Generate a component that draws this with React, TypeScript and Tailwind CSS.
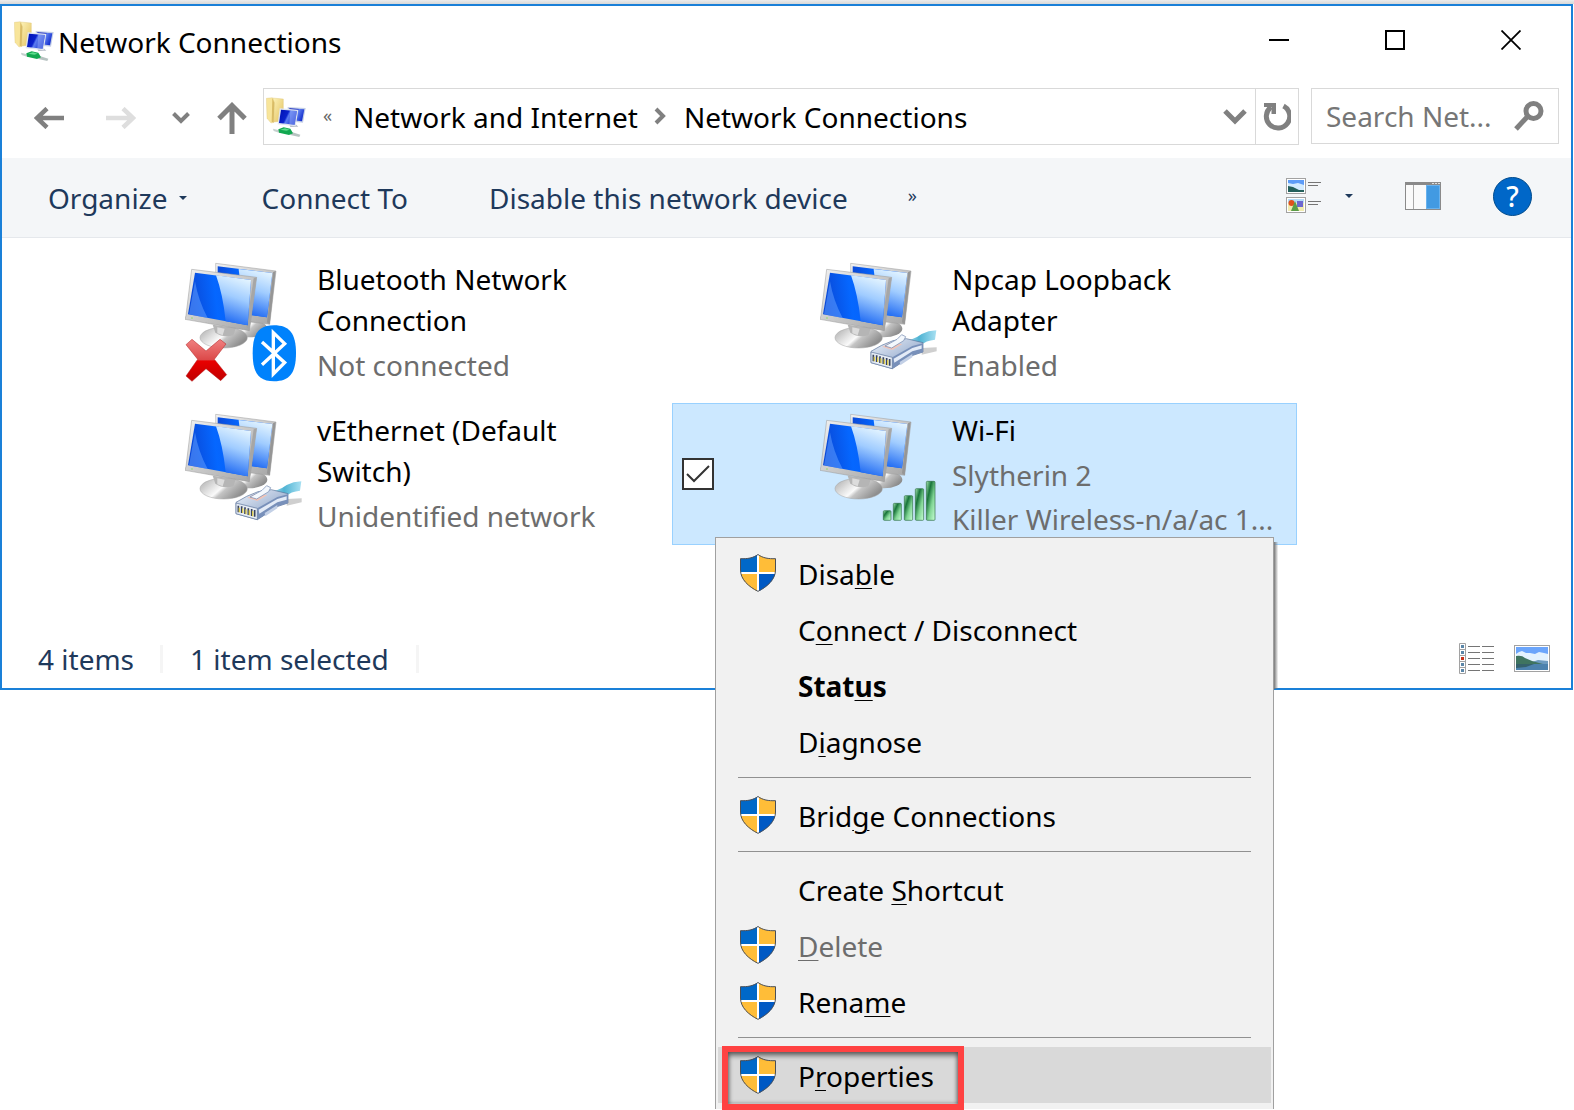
import type { ReactNode } from "react";

function FolderNetworkIcon() {
  return (
    <svg viewBox="797 288 120 120" className="size-10 shrink-0" aria-hidden="true">
      <defs>
        <linearGradient id="fold" x1="0" x2="1" y1="0" y2="1">
          <stop offset="0" stopColor="#fdf2b8" />
          <stop offset="1" stopColor="#e3c25f" />
        </linearGradient>
        <linearGradient id="scr" x1="0" x2="1" y1="0" y2="0.4">
          <stop offset="0" stopColor="#0010b0" />
          <stop offset="0.5" stopColor="#0a22cc" />
          <stop offset="0.6" stopColor="#5c7df0" />
          <stop offset="1" stopColor="#1733cf" />
        </linearGradient>
      </defs>
      <path d="M817 291l32 3v66l-29 3z" fill="url(#fold)" stroke="#d8bb63" strokeWidth="1" />
      <path d="M798 292l18-2 6 14-2 60-8 2-12-14z" fill="#f8e59b" stroke="#dcc27a" strokeWidth="1" />
      <path d="M816 291l6 14-2 60-6-3z" fill="#d9bc66" />
      <path d="M862 318l54 3-8 44-44-4z" fill="#c4cfe6" />
      <path d="M867 322l45 3-7 36-38-4z" fill="url(#scr)" />
      <path d="M866 368l22 3 6 6-24 1z" fill="#b9bec8" />
      <path d="M838 322l56 4-8 50-54-6z" fill="#dfe5f0" />
      <path d="M842 326l48 4-7 41-47-5z" fill="url(#scr)" />
      <path d="M870 329l20 1-7 41-16-2z" fill="#90a8f8" opacity=".55" />
      <path d="M818 383l24 6-4 7-18-6z" fill="#c5d0ce" />
      <path d="M872 392l28 9-3 7-27-6z" fill="#b7c3c1" />
      <path d="M834 385l16-6 20 4 8 14-12 5-30-7z" fill="#12a850" />
      <path d="M840 386l14-4 14 4-10 3z" fill="#5edc8d" />
    </svg>
  );
}

type Badge = "bluetooth" | "cable" | "signal";

function AdapterIcon({ badge }: { badge: Badge }) {
  return (
    <svg viewBox="45 50 351 360" className="h-[120px] w-[117px] shrink-0" aria-hidden="true">
      <defs>
        <linearGradient id="scrFront" x1="0" y1="0.1" x2="1" y2="0">
          <stop offset="0" stopColor="#0a49d8" />
          <stop offset="0.4" stopColor="#0567ff" />
          <stop offset="1" stopColor="#0a5cf2" />
        </linearGradient>
        <linearGradient id="glare" x1="0.7" y1="0" x2="0.45" y2="1">
          <stop offset="0" stopColor="#e8f7ff" />
          <stop offset="0.45" stopColor="#a0ccff" />
          <stop offset="1" stopColor="#1a66f2" />
        </linearGradient>
        <linearGradient id="bezel" x1="0" y1="0" x2="1" y2="1">
          <stop offset="0" stopColor="#f2f2f2" />
          <stop offset="0.5" stopColor="#c9c9c9" />
          <stop offset="1" stopColor="#a3a3a3" />
        </linearGradient>
        <linearGradient id="base" x1="0" y1="0" x2="1" y2="0.5">
          <stop offset="0" stopColor="#a8a8a8" />
          <stop offset="0.35" stopColor="#dedede" />
          <stop offset="0.55" stopColor="#fafafa" />
          <stop offset="0.65" stopColor="#c4c4c4" />
          <stop offset="1" stopColor="#8e8e8e" />
        </linearGradient>
        <linearGradient id="redx" x1="0" y1="0" x2="0" y2="1">
          <stop offset="0" stopColor="#f08080" />
          <stop offset="0.48" stopColor="#dc4a4a" />
          <stop offset="0.52" stopColor="#e80000" />
          <stop offset="1" stopColor="#c00000" />
        </linearGradient>
        <linearGradient id="bar" x1="0" y1="0" x2="1" y2="1">
          <stop offset="0" stopColor="#a8e8b4" />
          <stop offset="0.3" stopColor="#18743a" />
          <stop offset="0.6" stopColor="#7fd493" />
          <stop offset="1" stopColor="#c8ffd6" />
        </linearGradient>
        <linearGradient id="plug" x1="0" y1="0" x2="1" y2="1">
          <stop offset="0" stopColor="#eef3fb" />
          <stop offset="0.5" stopColor="#b3c3dc" />
          <stop offset="1" stopColor="#6f87ad" />
        </linearGradient>
        <linearGradient id="cord" x1="0" y1="0" x2="1" y2="0">
          <stop offset="0" stopColor="#d5f1fa" />
          <stop offset="0.5" stopColor="#4fb3d3" />
          <stop offset="1" stopColor="#a8e0f2" />
        </linearGradient>
      </defs>
      <ellipse cx="236" cy="250" rx="56" ry="26" fill="url(#base)" />
      <path d="M137 54l181 23-19 160-160-20z" fill="url(#bezel)" stroke="#9a9a9a" strokeWidth="1.5" />
      <path d="M143 63l164 20-16 133-148-20z" fill="url(#scrFront)" />
      <path d="M206 71l101 12-16 133-70-10z" fill="url(#glare)" />
      <path d="M317 77l-8 4-18 150 8 6z" fill="#969696" />
      <ellipse cx="161" cy="277" rx="71" ry="31" fill="url(#base)" stroke="#a5a5a5" strokeWidth="1.5" />
      <path d="M128 238l70 10-8 22q-30 8-54-8z" fill="#b5b5b5" />
      <path d="M142 246l22 4-6 20-16-6z" fill="#dcdcdc" />
      <path d="M65 72l195 24-22 160-193-34 3-12z" fill="url(#bezel)" stroke="#989898" strokeWidth="1.5" />
      <path d="M260 96l-9 3-22 146 9 11z" fill="#a6a6a6" />
      <path d="M75 82l168 22-10 136-179-33z" fill="url(#scrFront)" />
      <path d="M138 90l105 14-10 136-66-12q-8-80-29-138z" fill="url(#glare)" />
      <path d="M75 108q10 58 38 110l-56-11z" fill="#5e9cff" opacity=".55" />
      <circle cx="66" cy="218" r="2" fill="#7ee04c" />

      {badge === "bluetooth" && (
        <g>
          <path
            d="M48 298L66 282l42 35 42-35 18 14-35 46 37 46-18 18-44-36-42 38-18-16 35-50z"
            fill="url(#redx)"
            stroke="#b02020"
            strokeWidth="1.5"
          />
          <path
            d="M312 240c46 0 66 24 66 84s-20 84-66 84-64-24-64-84 18-84 64-84z"
            fill="#0082fc"
          />
          <path
            d="M276 290l68 62-34 34V262l34 33-68 63"
            fill="none"
            stroke="#fff"
            strokeWidth="10"
            strokeLinejoin="miter"
          />
        </g>
      )}

      {badge === "cable" && (
        <g>
          <path d="M350 308l45-2v12l-45 10z" fill="#cfcfcf" />
          <path d="M290 286q34 0 60-20 20-10 44-11l-4 28q-26 2-46 18l-50 4z" fill="url(#cord)" />
          <path
            d="M198 318l32-18 34-14 40-6 50 12v28l-30 10-62 40-64-18z"
            fill="url(#plug)"
            stroke="#5b729a"
            strokeWidth="2"
          />
          <path d="M232 304l24-12 36 4-30 18z" fill="#f0c4b8" />
          <path d="M240 302l36-20 14-14 12 6-6 12-36 22z" fill="#f4f8fd" stroke="#6b82aa" strokeWidth="2" />
          <path d="M262 336l60-34 32-8v26l-30 10-62 40z" fill="#7890ba" />
          <path d="M266 340l56-32 28-8v10l-28 8-54 34z" fill="#e3ebf7" />
          <path d="M284 350l38-24v10l-36 24z" fill="#c3d0e6" />
          <path d="M198 320l64 16v34l-64-18z" fill="#e6ecf5" stroke="#5b729a" strokeWidth="2" />
          <path d="M205 328v20M215 330v20M225 333v20M235 336v20M245 338v21M254 341v20" stroke="#39445e" strokeWidth="5" />
          <path d="M208 334v14M218 336v14M228 339v15M238 342v15M248 344v16" stroke="#dccb52" strokeWidth="4" />
        </g>
      )}

      {badge === "signal" && (
        <g fill="url(#bar)" stroke="#2c6e42" strokeWidth="2">
          <rect x="235" y="343" width="23" height="29" rx="3" />
          <rect x="265" y="321" width="24" height="51" rx="3" />
          <rect x="298" y="298" width="25" height="74" rx="3" />
          <rect x="331" y="277" width="25" height="95" rx="3" />
          <rect x="364" y="255" width="26" height="117" rx="3" />
        </g>
      )}
    </svg>
  );
}

function Shield() {
  return (
    <svg viewBox="0 0 108 114" className="h-[38px] w-9" aria-hidden="true">
      <defs>
        <clipPath id="shieldShape">
          <path d="M54 1C40 12 22 15 1 14v34c0 28 24 50 53 65 29-15 53-37 53-65V14C86 15 68 12 54 1z" />
        </clipPath>
      </defs>
      <g clipPath="url(#shieldShape)">
        <rect width="52" height="55" fill="#0068c8" />
        <rect x="56" width="52" height="55" fill="#ffbd38" />
        <rect y="59" width="52" height="55" fill="#ffbd38" />
        <rect x="56" y="59" width="52" height="55" fill="#0059c4" />
        <path d="M54 0v114M0 57h108" stroke="#fff" strokeWidth="6" />
      </g>
      <path
        d="M54 1.500C40 12 22 15 1.500 14v34c0 28 24 50 52.500 64 28.500-14 52.500-36 52.500-64V14C86 15 68 12 54 1.500z"
        fill="none"
        stroke="#4a4f57"
        strokeWidth="3"
      />
    </svg>
  );
}

function Landscape({ className }: { className: string }) {
  return (
    <svg viewBox="0 0 36 27" className={className} preserveAspectRatio="none" aria-hidden="true">
      <rect x=".5" y=".5" width="35" height="26" fill="#fff" stroke="#a2a2a2" />
      <rect x="2" y="2" width="32" height="9" fill="#6ba5fb" />
      <path d="M2 9l3-2 3-1 4 2 4 0 5 1 4-2 5 1 4 1v8H2z" fill="#e3f2fe" />
      <path d="M18 17l6-2 10 1v3H18z" fill="#6d9bc0" />
      <path d="M2 11q6-1 9 2 6 3 14 5l4 1H2z" fill="#3f7460" />
      <path d="M2 19h32v6H2z" fill="#4c82ae" />
      <path d="M2 19h18l-8 3-10 1z" fill="#35616b" />
    </svg>
  );
}

function ViewIcon() {
  return (
    <svg viewBox="0 0 36 36" className="size-9" aria-hidden="true">
      <rect x=".5" y=".5" width="19" height="15" fill="#fff" stroke="#a2a2a2" />
      <rect x="2" y="2" width="16" height="12" fill="#5d9cf8" />
      <path d="M2 5l5 1 5-1 6 2v5H2z" fill="#d2ebff" />
      <path d="M2 8l5 1 6 3h5v2H2z" fill="#24605c" />
      <rect x=".5" y="19.500" width="19" height="15" fill="#fff" stroke="#a2a2a2" />
      <rect x="2" y="21" width="16" height="12" fill="#f0ebb0" />
      <rect x="2" y="21" width="16" height="4" fill="#b5dcf8" />
      <rect x="11" y="23" width="6" height="6" fill="#6d68d0" />
      <circle cx="5.500" cy="25" r="3" fill="#e0501c" />
      <path d="M9 23l4 10H5z" fill="#5a9c48" />
      <path d="M22 4.500h13M22 7.500h10M22 23.500h13M22 26.500h10" stroke="#757575" />
    </svg>
  );
}

function PaneIcon() {
  return (
    <svg viewBox="0 0 36 28" className="h-7 w-9" aria-hidden="true">
      <rect x=".5" y=".5" width="35" height="27" fill="#fafafa" stroke="#8a8a8a" />
      <rect width="36" height="3" fill="#8a8a8a" />
      <path d="M27 1.500h2M30 1.500h2M33 1.500h2" stroke="#e0e0e0" />
      <path d="M8.500 3v24" stroke="#a8a8a8" />
      <rect x="21.500" y="3.500" width="13" height="23" fill="#429ae2" stroke="#69b2ee" />
    </svg>
  );
}

function DetailsIcon() {
  return (
    <svg viewBox="0 0 36 31" className="h-[31px] w-9" aria-hidden="true">
      <path d="M.5.500h6v30h-6zM.5 6.500h6M.5 12.500h6M.5 18.500h6M.5 24.500h6" fill="#fff" stroke="#a2a2a2" />
      <path d="M2 3.500h3M2 27.500h3M2 9.500h3M2 21.500h3" stroke="#5a86a8" strokeWidth="3" />
      <path d="M2 15.500h3" stroke="#c8321a" strokeWidth="3" />
      <path
        d="M9 3.500h12M23 3.500h12M9 9.500h12M23 9.500h12M9 15.500h12M23 15.500h12M9 21.500h12M23 21.500h12M9 27.500h12M23 27.500h12"
        stroke="#757575"
      />
    </svg>
  );
}

function Caret() {
  return (
    <svg viewBox="0 0 8 4" className="h-1 w-2" aria-hidden="true">
      <path d="M0 0h8L4 4z" fill="#1e395b" />
    </svg>
  );
}

function Tile({
  name,
  lines,
  badge,
  selected = false,
  children,
}: {
  name: string;
  lines: string[];
  badge: Badge;
  selected?: boolean;
  children?: ReactNode;
}) {
  return (
    <li
      className={
        selected
          ? "relative flex h-[142px] border border-[#99d1ff] bg-[#cce8ff]"
          : "relative flex h-[142px] border border-transparent"
      }
    >
      <div className="flex w-[147px] shrink-0 items-center pl-[9px]">
        {selected && (
          <span className="relative size-8">
            <input
              type="checkbox"
              defaultChecked
              aria-label={name}
              className="block size-8 appearance-none border-2 border-[#333] bg-white"
            />
            <svg viewBox="0 0 32 32" className="pointer-events-none absolute inset-0" aria-hidden="true">
              <path d="M5 16l7 7L27 8" fill="none" stroke="#333" strokeWidth="2" />
            </svg>
          </span>
        )}
      </div>
      <div className="pt-[9px]">
        <AdapterIcon badge={badge} />
      </div>
      <div className="min-w-0 flex-1 pt-1.5 pl-[15px]">
        <h2 className="w-[280px] leading-[41px]">{name}</h2>
        <div className="pt-0.5 leading-[44px] text-[#6d6d6d]">
          {lines.map((l) => (
            <p key={l} className="whitespace-nowrap">
              {l}
            </p>
          ))}
        </div>
      </div>
      {children}
    </li>
  );
}

function MenuItem({
  children,
  shield = false,
  bold = false,
  disabled = false,
  active = false,
}: {
  children: ReactNode;
  shield?: boolean;
  bold?: boolean;
  disabled?: boolean;
  active?: boolean;
}) {
  return (
    <button
      type="button"
      role="menuitem"
      disabled={disabled}
      className={`flex h-14 w-full items-center text-left ${active ? "bg-[#d9d9d9]" : ""} ${
        disabled ? "text-[#6d6d6d]" : "text-black"
      } ${bold ? "font-bold" : ""}`}
    >
      <span className="w-20 shrink-0 pl-[22px]">{shield && <Shield />}</span>
      <span className="pt-0.5 whitespace-nowrap">{children}</span>
    </button>
  );
}

function Key({ children }: { children: string }) {
  return <span className="underline decoration-1 underline-offset-[3px]">{children}</span>;
}

function Separator() {
  return (
    <div role="separator" className="h-[18px] px-5 pt-2">
      <div className="h-px bg-[#919191]" />
    </div>
  );
}

function ContextMenu() {
  return (
    <div
      role="menu"
      className="absolute top-[133px] left-[42px] z-10 w-[559px] border border-b-0 border-[#a0a0a0] bg-[#f1f1f1] px-0.5 pt-[7px] pb-1.5"
    >
      <div className="absolute top-1 left-full ml-px h-[147px] w-1 bg-linear-to-r from-[#777777] to-[#77777711]" />
      <MenuItem shield>
        Disa<Key>b</Key>le
      </MenuItem>
      <MenuItem>
        C<Key>o</Key>nnect / Disconnect
      </MenuItem>
      <MenuItem bold>
        Stat<Key>u</Key>s
      </MenuItem>
      <MenuItem>
        D<Key>i</Key>agnose
      </MenuItem>
      <Separator />
      <MenuItem shield>
        Brid<Key>g</Key>e Connections
      </MenuItem>
      <Separator />
      <MenuItem>
        Create <Key>S</Key>hortcut
      </MenuItem>
      <MenuItem shield disabled>
        <Key>D</Key>elete
      </MenuItem>
      <MenuItem shield>
        Rena<Key>m</Key>e
      </MenuItem>
      <Separator />
      <div className="relative">
        <MenuItem shield active>
          P<Key>r</Key>operties
        </MenuItem>
        <div className="pointer-events-none absolute -top-px left-1 h-16 w-[242px] border-6 border-[#ff4242] shadow-[inset_0_4px_5px_#00000070,inset_1px_0_4px_#00000040,inset_-1px_0_4px_#00000040]" />
      </div>
    </div>
  );
}

export default function App() {
  return (
    <div className="min-h-screen bg-white font-['Noto_Sans','Open_Sans',sans-serif] text-[28px] text-black">
      <div className="h-1 bg-linear-to-b from-[#ececec] to-[#d8d8d8]" />
      <main className="mr-px border-2 border-[#1a80d8] bg-white">
        <header className="flex h-[76px] items-start">
          <div className="flex flex-1 items-center gap-1 pt-[13px] pl-3">
            <FolderNetworkIcon />
            <h1 className="pt-0.5 leading-[42px]">Network Connections</h1>
          </div>
          <div className="flex pr-0.5">
            <button type="button" aria-label="Minimize" className="flex h-[68px] w-[116px] items-center justify-center">
              <span className="h-0.5 w-5 bg-black" />
            </button>
            <button type="button" aria-label="Maximize" className="flex h-[68px] w-[116px] items-center justify-center">
              <span className="size-5 border-2 border-black" />
            </button>
            <button type="button" aria-label="Close" className="flex h-[68px] w-[116px] items-center justify-center">
              <svg viewBox="0 0 20 20" className="size-5" aria-hidden="true">
                <path d="M.5.500l19 19M19.500.500l-19 19" stroke="#000" strokeWidth="1.800" />
              </svg>
            </button>
          </div>
        </header>

        <nav className="flex h-[76px] items-start pt-1.5 pr-3">
          <div className="flex h-[60px] w-[261px] shrink-0 items-center pl-8">
            <button type="button" aria-label="Back">
              <svg viewBox="0 0 30 22" className="h-[22px] w-[30px]">
                <path d="M30 11H3M13 1.500L3 11l10 9.500" fill="none" stroke="#808080" strokeWidth="4.500" />
              </svg>
            </button>
            <button type="button" aria-label="Forward" className="ml-[42px]">
              <svg viewBox="0 0 30 22" className="h-[22px] w-[30px]">
                <path d="M0 11h27M17 1.500L27 11l-10 9.500" fill="none" stroke="#dedede" strokeWidth="4.500" />
              </svg>
            </button>
            <button type="button" aria-label="Recent locations" className="ml-9">
              <svg viewBox="0 0 18 12" className="h-3 w-[18px]">
                <path d="M1.500 1.500L9 9l7.500-7.500" fill="none" stroke="#808080" strokeWidth="4" />
              </svg>
            </button>
            <button type="button" aria-label="Up" className="ml-[27px]">
              <svg viewBox="0 0 30 32" className="h-8 w-[30px]">
                <path d="M15 32V4M2 16.500L15 3.500l13 13" fill="none" stroke="#808080" strokeWidth="5" />
              </svg>
            </button>
          </div>
          <div className="flex h-[57px] flex-1 items-center border border-[#d9d9d9] pl-0.5">
            <FolderNetworkIcon />
            <span className="w-[47px] shrink-0 pb-1 pl-[17px] text-lg text-[#666]">«</span>
            <button type="button" className="whitespace-nowrap">
              Network and Internet
            </button>
            <svg viewBox="0 0 12 20" className="mr-[18px] ml-4 h-5 w-3 shrink-0" aria-hidden="true">
              <path d="M2 2l7 7-7 7" fill="none" stroke="#808080" strokeWidth="4" />
            </svg>
            <button type="button" className="whitespace-nowrap">
              Network Connections
            </button>
            <button type="button" aria-label="Previous locations" className="mr-2 ml-auto">
              <svg viewBox="0 0 24 16" className="h-4 w-6">
                <path d="M2 2l10 10L22 2" fill="none" stroke="#808080" strokeWidth="5" />
              </svg>
            </button>
            <button
              type="button"
              aria-label="Refresh"
              className="flex h-full w-[43px] items-center justify-center border-l border-[#d9d9d9]"
            >
              <svg viewBox="0 0 28 28" className="size-7">
                <path d="M20.500 3A11.700 11.700 0 1 1 8 4" fill="none" stroke="#808080" strokeWidth="5" />
                <path d="M1 0h12v11H8.500V4H1z" fill="#808080" />
              </svg>
            </button>
          </div>
          <label className="ml-3 flex h-14 w-[248px] shrink-0 items-center border border-[#d9d9d9] px-3.5">
            <input
              type="text"
              aria-label="Search Network Connections"
              placeholder="Search Net..."
              className="w-0 min-w-0 flex-1 bg-transparent outline-none placeholder:text-[#767676]"
            />
            <svg viewBox="0 0 30 30" className="size-[30px] shrink-0" aria-hidden="true">
              <circle cx="19.500" cy="10" r="7.500" fill="none" stroke="#808080" strokeWidth="5" />
              <path d="M14 15L2 28" stroke="#808080" strokeWidth="5" />
            </svg>
          </label>
        </nav>

        <div className="flex h-20 items-center border-b border-[#e5e8ec] bg-[#f4f6f8] text-[#1e395b]">
          <button type="button" className="ml-[46px] flex items-center gap-[11px] whitespace-nowrap">
            Organize <Caret />
          </button>
          <button type="button" className="ml-[75px] whitespace-nowrap">
            Connect To
          </button>
          <button type="button" className="ml-[81px] whitespace-nowrap">
            Disable this network device
          </button>
          <button type="button" aria-label="More commands" className="ml-[60px] pb-1.5 text-lg">
            »
          </button>
          <div className="ml-auto flex items-center pr-[39px] pb-[3px]">
            <button type="button" aria-label="Change your view">
              <ViewIcon />
            </button>
            <button type="button" aria-label="More view options" className="ml-[23px]">
              <Caret />
            </button>
            <button type="button" aria-label="Preview pane" className="ml-[52px]">
              <PaneIcon />
            </button>
            <button
              type="button"
              aria-label="Help"
              className="ml-[52px] flex size-[39px] items-center justify-center rounded-full border border-[#004b8d] bg-[#0067c8] text-[28px] leading-none font-medium text-white"
            >
              ?
            </button>
          </div>
        </div>

        <ul className="grid grid-cols-[repeat(auto-fill,625px)] gap-x-2.5 gap-y-[9px] pt-3.5 pb-[82px] pl-[35px]">
          <Tile name="Bluetooth Network Connection" lines={["Not connected"]} badge="bluetooth" />
          <Tile name="Npcap Loopback Adapter" lines={["Enabled"]} badge="cable" />
          <Tile name="vEthernet (Default Switch)" lines={["Unidentified network"]} badge="cable" />
          <Tile name="Wi-Fi" lines={["Slytherin 2", "Killer Wireless-n/a/ac 1..."]} badge="signal" selected>
            <ContextMenu />
          </Tile>
        </ul>

        <footer className="flex h-[61px] items-center pt-0.5 pr-[21px] pl-9 text-[#1e395b]">
          <span>4 items</span>
          <span className="ml-[26px] h-7 w-[3px] bg-[#f5f5f5]" />
          <span className="ml-[27px]">1 item selected</span>
          <span className="ml-[27px] h-7 w-[3px] bg-[#f5f5f5]" />
          <button type="button" aria-label="Details view" className="ml-auto">
            <DetailsIcon />
          </button>
          <button type="button" aria-label="Large icons view" className="ml-[19px]">
            <Landscape className="h-[27px] w-9" />
          </button>
        </footer>
      </main>
    </div>
  );
}
